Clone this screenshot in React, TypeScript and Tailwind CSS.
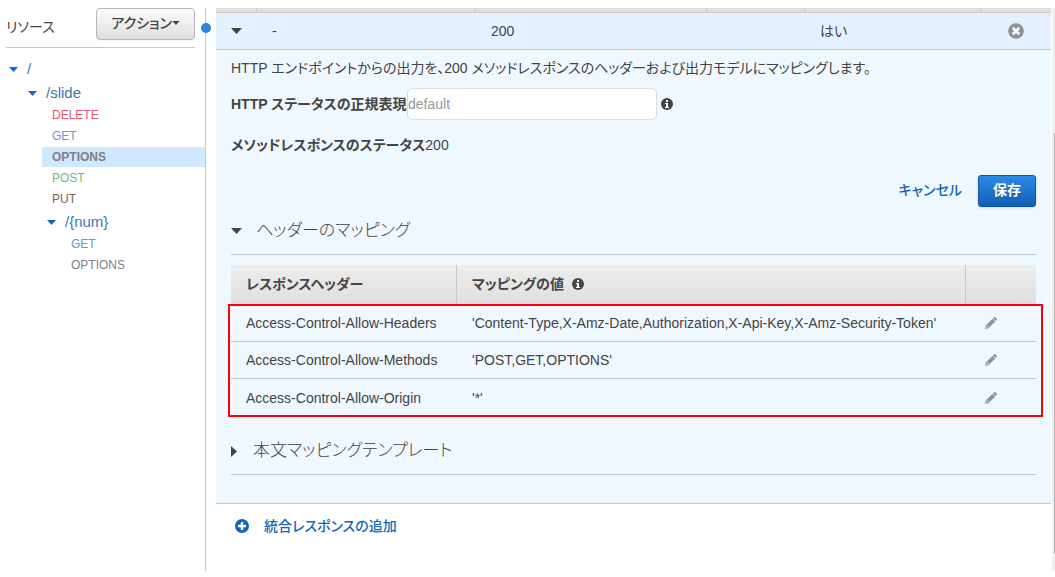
import React from "react";

function CaretDown({ className = "h-[6px] w-[11px]" }: { className?: string }) {
  return (
    <svg viewBox="0 0 11 6" className={`shrink-0 fill-current ${className}`} aria-hidden="true">
      <path d="M0 0h11L5.5 6z" />
    </svg>
  );
}

function CaretRight() {
  return (
    <svg viewBox="0 0 6 11" className="h-[11px] w-[6px] shrink-0 fill-current" aria-hidden="true">
      <path d="M0 0v11l6-5.5z" />
    </svg>
  );
}

function InfoIcon({ className = "" }: { className?: string }) {
  return (
    <svg viewBox="0 0 12 12" className={`size-3 shrink-0 ${className}`} aria-hidden="true">
      <circle cx="6" cy="6" r="6" fill="currentColor" />
      <path d="M5 2h2v2H5zM4 5h3v4h1v1H4V9h1V6H4z" fill="#ffffff" />
    </svg>
  );
}

function RemoveIcon() {
  return (
    <svg viewBox="0 0 16 16" className="size-4" aria-hidden="true">
      <circle cx="8" cy="8" r="7.8" fill="currentColor" />
      <path d="M4.800 4.800l6.400 6.400M11.200 4.800l-6.400 6.400" stroke="#f4f8fd" strokeWidth="2.8" />
    </svg>
  );
}

function PlusIcon() {
  return (
    <svg viewBox="0 0 14 14" className="size-[14px] shrink-0" aria-hidden="true">
      <circle cx="7" cy="7" r="7" fill="currentColor" />
      <path d="M7 3v8M3 7h8" stroke="#ffffff" strokeWidth="2.4" />
    </svg>
  );
}

function PencilIcon() {
  return (
    <svg viewBox="0 0 12 12" className="size-3 fill-current" aria-hidden="true">
      <path d="M8.900.4a1.200 1.200 0 0 1 1.700 0l1 1a1.200 1.200 0 0 1 0 1.700l-.9.9L8 1.300z" />
      <path d="M7.600 1.700l2.700 2.700-5.900 5.900-2.700-2.700z" />
      <path fillRule="evenodd" d="M.9 7.400l3.700 3.700L0 12zM1.100 9.700l-.3 1.500 1.500-.3z" />
    </svg>
  );
}

type Method = { name: string; color: string; selected?: boolean };

const slideMethods: Method[] = [
  { name: "DELETE", color: "text-[#e0566f]" },
  { name: "GET", color: "text-[#6a94cc]" },
  { name: "OPTIONS", color: "text-[#808080]", selected: true },
  { name: "POST", color: "text-[#68bb80]" },
  { name: "PUT", color: "text-[#7d5f48]" },
];

const numMethods: Method[] = [
  { name: "GET", color: "text-[#6a94cc]" },
  { name: "OPTIONS", color: "text-[#808080]" },
];

const mappings = [
  { header: "Access-Control-Allow-Headers", value: "'Content-Type,X-Amz-Date,Authorization,X-Api-Key,X-Amz-Security-Token'" },
  { header: "Access-Control-Allow-Methods", value: "'POST,GET,OPTIONS'" },
  { header: "Access-Control-Allow-Origin", value: "'*'" },
];

function Folder({ label }: { label: string }) {
  return (
    <button className="flex h-6 items-center gap-[9px] text-[15px] text-[#3f76b5]">
      <CaretDown className="h-[5px] w-[9px] text-[#1668bd]" />
      {label}
    </button>
  );
}

function MethodList({ methods }: { methods: Method[] }) {
  return (
    <ul className="flex flex-col gap-px pb-px">
      {methods.map((m) => (
        <li key={m.name} className={m.selected ? "bg-[#cfe7ff] font-bold" : ""}>
          <a href="#" className={`block h-5 pl-[10px] text-[12px] leading-5 ${m.color}`}>
            {m.name}
          </a>
        </li>
      ))}
    </ul>
  );
}

function Sidebar() {
  return (
    <aside className="relative w-[206px] shrink-0 border-r border-[#c8c8c8]">
      <div className="ml-[6px] mr-[10px] flex h-10 items-start justify-between border-b border-[#c8c8c8]">
        <h1 className="pt-[9px] text-[14px] leading-5">リソース</h1>
        <button className="flex h-8 items-center rounded border border-[#b8b8b8] bg-linear-to-b from-[#fdfdfd] to-[#dedede] px-[14px] pb-[2px] text-[14px] font-medium shadow-xs">
          アクション
          <CaretDown className="h-[4px] w-[8px]" />
        </button>
      </div>
      <nav className="pt-[9px]">
        <div className="pl-[9px]">
          <Folder label="/" />
        </div>
        <div className="pl-[28px]">
          <Folder label="/slide" />
        </div>
        <div className="pl-[42px]">
          <MethodList methods={slideMethods} />
        </div>
        <div className="pl-[47px]">
          <Folder label="/{num}" />
        </div>
        <div className="pl-[61px]">
          <MethodList methods={numMethods} />
        </div>
      </nav>
      <span className="absolute -right-[6px] top-[15px] size-[10px] rounded-full bg-[#2a86e0]" />
    </aside>
  );
}

function SectionTitle({ open, children }: { open?: boolean; children: React.ReactNode }) {
  return (
    <h2 className="border-b border-[#c8c8c8] pb-[10px]">
      <button className={`flex h-[26px] items-center text-[17px] font-light ${open ? "gap-[14px]" : "gap-4"}`}>
        {open ? <CaretDown /> : <CaretRight />}
        {children}
      </button>
    </h2>
  );
}

function HeaderMappings() {
  return (
    <div className="relative mt-[10px]">
      <table className="w-full table-fixed border-separate border-spacing-0 text-left">
        <colgroup>
          <col className="w-[226px]" />
          <col />
          <col className="w-[70px]" />
        </colgroup>
        <thead>
          <tr className="bg-linear-to-b from-[#ededed] to-[#dfdfdf]">
            <th className="h-10 border-r border-[#c8c8c8] px-[15px] pb-[2px] pt-0 font-bold">レスポンスヘッダー</th>
            <th className="h-10 border-r border-[#c8c8c8] px-[15px] pb-[2px] pt-0 font-bold">
              <span className="flex items-center gap-2">
                マッピングの値 <InfoIcon />
              </span>
            </th>
            <th aria-label="編集" />
          </tr>
        </thead>
        <tbody className="[&>tr:not(:last-child)>td]:border-b">
          {mappings.map((m) => (
            <tr key={m.header}>
              <td className="h-[37px] border-[#c8c8c8] px-[15px] py-0">{m.header}</td>
              <td className="h-[37px] whitespace-nowrap border-[#c8c8c8] px-[15px] py-0">{m.value}</td>
              <td className="h-[37px] border-[#c8c8c8] py-0 pl-[19px]">
                <button className="block text-[#939393]" aria-label="編集">
                  <PencilIcon />
                </button>
              </td>
            </tr>
          ))}
        </tbody>
      </table>
      <div className="pointer-events-none absolute -bottom-[1px] -left-[3px] -right-[7px] top-[39px] border-2 border-[#fb0007]" />
    </div>
  );
}

function ResponseDetail() {
  return (
    <div className="px-[15px] pb-7 pt-2">
      <p className="leading-5">
        HTTP エンドポイントからの出力を、200 メソッドレスポンスのヘッダーおよび出力モデルにマッピングします。
      </p>
      <div className="mt-[10px] flex h-8 items-center">
        <label htmlFor="status-regex" className="w-44 shrink-0 whitespace-nowrap font-bold">
          HTTP ステータスの正規表現
        </label>
        <input
          id="status-regex"
          placeholder="default"
          className="h-8 w-[250px] rounded-[5px] border border-[#dddddd] bg-white placeholder:text-[#999999]"
        />
        <InfoIcon className="ml-1" />
      </div>
      <p className="mt-[15px] leading-5">
        <span className="font-bold">メソッドレスポンスのステータス</span>200
      </p>
      <div className="mt-5 flex items-center justify-end gap-4">
        <button className="pb-[2px] font-medium text-[#1166bb]">キャンセル</button>
        <button className="h-8 rounded-[3px] border border-[#0f56a0] bg-linear-to-b from-[#2d89e4] to-[#1160b8] px-[14px] pb-[2px] font-bold text-white shadow-sm text-shadow-xs">
          保存
        </button>
      </div>
      <div className="mt-[11px]">
        <SectionTitle open>ヘッダーのマッピング</SectionTitle>
      </div>
      <HeaderMappings />
      <div className="mt-[22px]">
        <SectionTitle>本文マッピングテンプレート</SectionTitle>
      </div>
    </div>
  );
}

export default function App() {
  return (
    <div className="flex min-h-screen bg-white pb-[6px] pt-2 font-['Liberation_Sans','Noto_Sans_CJK_JP',sans-serif] text-[14px] leading-5 text-[#444444] [font-feature-settings:'palt']">
      <Sidebar />
      <main className="ml-[10px] min-w-0 flex-1">
        <table className="w-full table-fixed border-separate border-spacing-0 text-left">
          <colgroup>
            <col className="w-[41px]" />
            <col className="w-[219px]" />
            <col />
            <col className="w-[98px]" />
            <col className="w-[176px]" />
            <col className="w-[70px]" />
          </colgroup>
          <thead>
            <tr className="bg-[#dfdfdf]">
              <th className="h-[5px] border-b border-r border-[#c8c8c8] p-0" />
              <th className="border-b border-r border-[#c8c8c8] p-0" />
              <th className="border-b border-r border-[#c8c8c8] p-0" />
              <th className="border-b border-r border-[#c8c8c8] p-0" />
              <th className="border-b border-r border-[#c8c8c8] p-0" />
              <th className="border-b border-[#c8c8c8] p-0" />
            </tr>
          </thead>
          <tbody>
            <tr className="bg-[#e5f1fe]">
              <td className="h-[37px] border-b border-[#c8c8c8] py-0 pl-[15px]">
                <button className="block" aria-label="折りたたむ">
                  <CaretDown />
                </button>
              </td>
              <td className="border-b border-[#c8c8c8] py-0 pl-[15px]">-</td>
              <td className="border-b border-[#c8c8c8] py-0 pl-[15px]">200</td>
              <td className="border-b border-[#c8c8c8]" />
              <td className="border-b border-[#c8c8c8] py-0 pl-[15px]">はい</td>
              <td className="border-b border-[#c8c8c8] py-0">
                <button className="mx-auto block text-[#919191]" aria-label="削除">
                  <RemoveIcon />
                </button>
              </td>
            </tr>
            <tr className="bg-[#f0f8ff]">
              <td colSpan={6} className="border-b border-[#c8c8c8] p-0">
                <ResponseDetail />
              </td>
            </tr>
          </tbody>
        </table>
        <button className="ml-[19px] mt-[10px] flex h-6 items-center gap-[15px] font-medium text-[#1166bb]">
          <PlusIcon />
          統合レスポンスの追加
        </button>
      </main>
      <div className="ml-px flex w-[3px] shrink-0 flex-col items-end bg-[#f0f0f0] pb-[17px] pt-[125px]" aria-hidden="true">
        <div className="w-px flex-1 bg-[#b5b5b5]" />
      </div>
    </div>
  );
}
